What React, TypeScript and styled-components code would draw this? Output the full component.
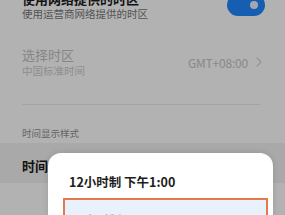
import React from 'react';
import styled, { createGlobalStyle } from 'styled-components';

const GlobalStyle = createGlobalStyle`
  html, body {
    margin: 0;
    padding: 0;
    background: #fff;
  }
  body {
    font-family: "Noto Sans CJK SC", "Noto Sans", sans-serif;
  }
`;

const Screen = styled.div`
  position: relative;
  width: 285px;
  height: 215px;
  overflow: hidden;
  background: #ffffff;
`;

// the list is scrolled, so the first title is cut at the top
const List = styled.div`
  margin-top: -9px;
`;

interface RowProps {
  pt?: number;
  pb?: number;
  pr?: number;
}

const Row = styled.div<RowProps>`
  display: flex;
  align-items: center;
  justify-content: space-between;
  padding: ${p => p.pt ?? 0}px ${p => p.pr ?? 20}px ${p => p.pb ?? 0}px 22px;
`;

const TextBlock = styled.div`
  display: flex;
  flex-direction: column;
`;

const Title = styled.div<{ disabled?: boolean }>`
  font-size: 13px;
  line-height: ${p => (p.disabled ? 18 : 16)}px;
  font-weight: ${p => (p.disabled ? 400 : 700)};
  color: ${p => (p.disabled ? '#c0c0c0' : '#1a1a1a')};
  white-space: nowrap;
`;

const Sub = styled.div<{ disabled?: boolean }>`
  font-size: 10.5px;
  line-height: 14px;
  color: ${p => (p.disabled ? '#cccccc' : '#777777')};
  white-space: nowrap;
`;

const Switch = styled.div`
  position: relative;
  width: 38px;
  height: 22px;
  margin-top: -3px;
  border-radius: 11px;
  background: #1f87ff;
  flex-shrink: 0;
`;

const Knob = styled.div`
  position: absolute;
  right: 7px;
  top: 7px;
  width: 8px;
  height: 8px;
  border-radius: 50%;
  background: #eaf1fb;
`;

const Value = styled.div`
  display: flex;
  align-items: center;
  gap: 8px;
  font-size: 12px;
  color: #c4c4c4;
  letter-spacing: -0.2px;
`;

const Divider = styled.div`
  height: 1px;
  margin: 0 25px 0 22px;
  background: #eaeaea;
`;

const SectionHeader = styled.div`
  padding: 22px 22px 4px;
  font-size: 9.5px;
  line-height: 12px;
  color: #8f8f8f;
`;

const PressedRow = styled.div`
  padding: 15px 22px 9px;
  background: #f3f3f3;
  font-size: 13px;
  line-height: 16px;
  font-weight: 700;
  color: #1a1a1a;
`;

const Dim = styled.div`
  position: absolute;
  inset: 0;
  background: rgba(0, 0, 0, 0.3);
`;

const Dialog = styled.div`
  position: absolute;
  left: 48px;
  top: 153px;
  width: 225px;
  height: 120px;
  box-sizing: border-box;
  padding: 21px 5px 0 15px;
  background: #ffffff;
  border-radius: 13px;
  box-shadow: 0 0 6px rgba(0, 0, 0, 0.12);
`;

const Option = styled.div`
  padding: 0 6px;
  font-size: 12.5px;
  line-height: 16px;
  font-weight: 600;
  color: #1c1c1c;
  white-space: nowrap;
`;

const SelectedOption = styled(Option)`
  margin-top: 8px;
  padding: 12px 4px;
  border: 2px solid #e27a4e;
  background: #e8f1fc;
  color: #9dbde6;
`;

const Chevron = () => (
  <svg width="6" height="10" viewBox="0 0 6 10" fill="none">
    <path d="M1 1l4 4-4 4" stroke="#d4d4d4" strokeWidth="1.2" strokeLinecap="round" strokeLinejoin="round" />
  </svg>
);

export default function App() {
  return (
    <Screen>
      <GlobalStyle />
      <List>
        <Row pb={13}>
          <TextBlock>
            <Title>使用网络提供的时区</Title>
            <Sub>使用运营商网络提供的时区</Sub>
          </TextBlock>
          <Switch>
            <Knob />
          </Switch>
        </Row>
        <Row pt={12} pb={26} pr={23}>
          <TextBlock>
            <Title disabled>选择时区</Title>
            <Sub disabled>中国标准时间</Sub>
          </TextBlock>
          <Value>
            GMT+08:00
            <Chevron />
          </Value>
        </Row>
        <Divider />
        <SectionHeader>时间显示样式</SectionHeader>
        <PressedRow>时间格式</PressedRow>
      </List>
      <Dim />
      <Dialog>
        <Option>12小时制 下午1:00</Option>
        <SelectedOption>24小时制 13:00</SelectedOption>
      </Dialog>
    </Screen>
  );
}
